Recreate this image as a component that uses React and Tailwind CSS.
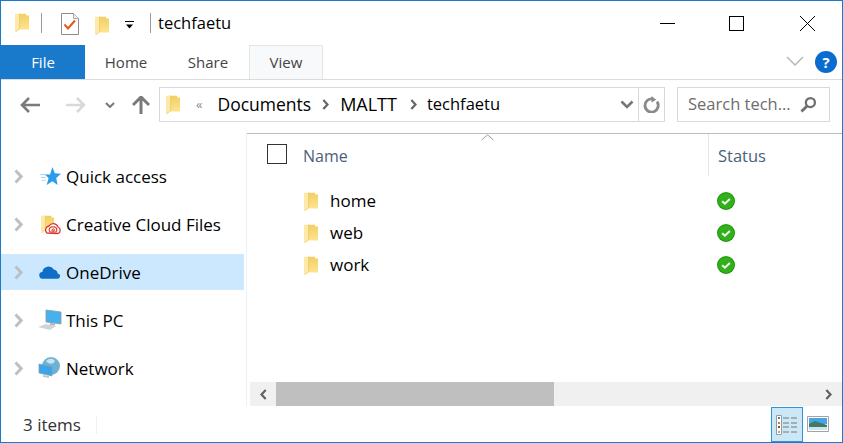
const font = { fontFamily: '"Open Sans", "Noto Sans", sans-serif' };

function Folder({ className = "w-[15px] h-[21px]" }) {
  return (
    <svg viewBox="0 0 15 21" className={className}>
      <defs>
        <linearGradient id="folderBody" x1="0" y1="0" x2="0" y2="1">
          <stop offset="0" stopColor="#f3cf63" />
          <stop offset="1" stopColor="#fde48f" />
        </linearGradient>
      </defs>
      <path d="M3 1h9v2h3v15H3z" fill="url(#folderBody)" />
      <path d="M0 1h5v16l-4 3.500-1 .5z" fill="#fee9a8" />
      <path d="M5 1v16l-4 3.500" fill="none" stroke="#e6c25a" strokeWidth="0.700" />
    </svg>
  );
}

function StatusCheck() {
  return (
    <svg viewBox="0 0 18 18" className="w-[18px] h-[18px]">
      <circle cx="9" cy="9" r="9" fill="#1f9a10" />
      <circle cx="9" cy="9" r="7.800" fill="#33b11c" />
      <path d="M5.200 9.200l2.700 2.500 4.900-4.600" fill="none" stroke="#f2fbea" strokeWidth="2" />
    </svg>
  );
}

function Arrow({ dir, className }) {
  return (
    <svg viewBox="0 0 9 15" className={className}>
      <path d={dir === "left" ? "M7.500 1.500L1.800 7.500l5.700 6" : "M1.500 1.500l5.700 6-5.700 6"} fill="none" stroke="currentColor" strokeWidth="3" />
    </svg>
  );
}

function NavRow({ icon, label, selected }) {
  return (
    <div className={`flex h-[36px] items-center ${selected ? "bg-[#cce8ff]" : ""}`}>
      <Arrow dir="right" className="ml-[13px] h-[15px] w-[9px] text-[#bfbfbf]" />
      <div className="ml-[15px] flex w-[28px] items-center">{icon}</div>
      <span className="mt-[1px] text-[17px] text-[#000]">{label}</span>
    </div>
  );
}

function FileRow({ name }) {
  return (
    <div className="flex h-[32px] items-center">
      <div className="ml-[57px] w-[26px]">
        <Folder className="w-[14px] h-[21px]" />
      </div>
      <span className="w-[387px] text-[17px] text-[#000]">{name}</span>
      <StatusCheck />
    </div>
  );
}

export default function App() {
  return (
    <div style={font} className="flex h-[443px] w-[843px] flex-col overflow-hidden border border-[#1979ca] bg-white text-black">
      {/* title bar */}
      <div className="flex h-[44px] items-center">
        <Folder className="ml-[14px] w-[14px] h-[21px] -translate-y-px" />
        <div className="ml-[12px] h-[20px] w-px bg-[#9a9a9a]" />
        <svg viewBox="0 0 18 22" className="ml-[19px] w-[18px] h-[22px] translate-y-px">
          <path d="M.5.5h12l5 5v16H.5z" fill="#fff" stroke="#8d8d8d" />
          <path d="M12.500.5v5h5" fill="#eee" stroke="#aaa" />
          <path d="M3.500 11.500l3.500 4 7-8" fill="none" stroke="#e2571e" strokeWidth="2" />
        </svg>
        <Folder className="ml-[16px] w-[14px] h-[21px] translate-y-[2px]" />
        <svg viewBox="0 0 10 10" className="ml-[16px] w-[10px] h-[10px] translate-y-[2px]">
          <path d="M0 1h9v1H0z" fill="#000" />
          <path d="M1 4.500h7L4.500 8.500z" fill="#000" />
        </svg>
        <div className="ml-[15px] h-[20px] w-px bg-[#9a9a9a]" />
        <span className="ml-[7px] text-[16.5px]">techfaetu</span>
        <div className="flex-1" />
        <div className="flex items-center">
          <div className="h-px w-[15px] bg-black" />
          <div className="ml-[54px] h-[15px] w-[15px] border border-black" />
          <svg viewBox="0 0 15 15" className="ml-[56px] w-[15px] h-[15px]">
            <path d="M0 0l15 15M15 0L0 15" stroke="#000" strokeWidth="1" />
          </svg>
          <div className="w-[27px]" />
        </div>
      </div>

      {/* tabs */}
      <div className="flex h-[35px] border-b border-[#dadbdc]">
        <div className="flex w-[84px] items-center justify-center bg-[#1979ca] text-[15px] text-white">File</div>
        <div className="flex w-[82px] items-center justify-center text-[15px] text-[#444]">Home</div>
        <div className="flex w-[82px] items-center justify-center text-[15px] text-[#444]">Share</div>
        <div className="flex w-[74px] items-center justify-center border-x border-t border-[#e4e5e6] bg-[#f8f9fa] text-[15px] text-[#444]">View</div>
        <div className="flex-1" />
        <svg viewBox="0 0 18 10" className="mr-[11px] mt-[11px] w-[18px] h-[10px]">
          <path d="M1 1l8 8 8-8" fill="none" stroke="#b8b8b8" strokeWidth="1.500" />
        </svg>
        <div className="mr-[5px] mt-[6px] flex h-[22px] w-[22px] items-center justify-center rounded-full bg-[#0a6cce] text-[15px] font-bold text-white">?</div>
      </div>

      {/* address bar */}
      <div className="flex h-[53px] items-center pb-[11px] pt-[7px]">
        <svg viewBox="0 0 20 16" className="ml-[19px] w-[20px] h-[16px]">
          <path d="M9 1L2 8l7 7M2 8h18" fill="none" stroke="#7a7a7a" strokeWidth="2.600" />
        </svg>
        <svg viewBox="0 0 20 16" className="ml-[26px] w-[20px] h-[16px]">
          <path d="M11 1l7 7-7 7M18 8H0" fill="none" stroke="#d9d9d9" strokeWidth="2.600" />
        </svg>
        <svg viewBox="0 0 10 6" className="ml-[19px] w-[10px] h-[6px]">
          <path d="M1 1l4 4 4-4" fill="none" stroke="#777" strokeWidth="2" />
        </svg>
        <svg viewBox="0 0 18 18" className="ml-[17px] w-[18px] h-[18px]">
          <path d="M1 9l8-8 8 8M9 1v17" fill="none" stroke="#7a7a7a" strokeWidth="3" />
        </svg>
        <div className="ml-[9px] flex h-[35px] w-[506px] items-center border border-[#d9d9d9]">
          <Folder className="ml-[6px] w-[14px] h-[21px]" />
          <span className="ml-[16px] text-[13px] text-[#888]">«</span>
          <span className="ml-[15px] text-[17.5px]">Documents</span>
          <Arrow dir="right" className="mx-[10px] h-[11px] w-[9px] text-[#666]" />
          <span className="text-[18px]">MALTT</span>
          <Arrow dir="right" className="ml-[12px] mr-[9px] h-[11px] w-[9px] text-[#666]" />
          <span className="text-[16.5px]">techfaetu</span>
          <div className="flex-1" />
          <svg viewBox="0 0 14 9" className="mr-[4px] w-[14px] h-[9px]">
            <path d="M1.500 1.500L7 7l5.500-5.500" fill="none" stroke="#777" strokeWidth="2.600" />
          </svg>
          <div className="flex h-full w-[26px] items-center justify-center border-l border-[#d9d9d9]">
            <svg viewBox="0 0 18 18" className="w-[17px] h-[17px]">
              <path d="M14.800 6a7 7 0 1 1-4.300-2.800" fill="none" stroke="#8a8a8a" strokeWidth="3" />
              <path d="M9 0v7l5-3z" fill="#8a8a8a" />
            </svg>
          </div>
        </div>
        <div className="ml-[12px] flex h-[35px] w-[153px] items-center justify-between border border-[#d9d9d9] pl-[10px] pr-[12px]">
          <span className="text-[16.5px] text-[#6d6d6d]">Search tech...</span>
          <svg viewBox="0 0 18 18" className="w-[17px] h-[17px]">
            <circle cx="11" cy="7" r="4.800" fill="none" stroke="#707070" strokeWidth="2.400" />
            <path d="M7.500 10.500L1.500 16.500" stroke="#707070" strokeWidth="3" />
          </svg>
        </div>
      </div>

      {/* body */}
      <div className="flex min-h-0 flex-1">
        <div className="w-[245px] pr-[2px] pt-[25px]">
          <div className="flex flex-col gap-[12px]">
            <NavRow
              label="Quick access"
              icon={
                <svg viewBox="0 0 22 20" className="ml-[2px] w-[21px] h-[19px]">
                  <path d="M13 0l2.500 6.500L22 7l-5 4.500L18.500 19 13 15l-6 4 2-7.500L5 8h5.500z" fill="#2c9cea" />
                  <path d="M0 8h6M1 11h5M2 14h4" stroke="#9ed2f5" strokeWidth="1" />
                </svg>
              }
            />
            <NavRow
              label="Creative Cloud Files"
              icon={
                <div className="relative ml-[3px] h-[24px] w-[22px]">
                  <Folder className="w-[13px] h-[24px]" />
                  <svg viewBox="0 0 16 14" className="absolute bottom-[1px] right-[2px] w-[16px] h-[14px]">
                    <path d="M2 12a4 4 0 0 1 2-7 5 5 0 0 1 9 1 3.500 3.500 0 0 1 0 6.500z" fill="#fff" stroke="#e0342b" strokeWidth="1.300" />
                    <path d="M5 11a3 3 0 0 1 3-5 3 3 0 0 1 3 5z" fill="none" stroke="#e0342b" strokeWidth="1.200" />
                    <path d="M7 10a1.500 1.500 0 0 1 2-2 1.500 1.500 0 0 1 0 2z" fill="none" stroke="#e0342b" strokeWidth="1" />
                  </svg>
                </div>
              }
            />
            <NavRow
              selected
              label="OneDrive"
              icon={
                <svg viewBox="0 0 23 16" className="ml-[1px] w-[22px] h-[16px]">
                  <path d="M4 15a3.500 3.500 0 0 1-.5-7A6.500 6.500 0 0 1 15.500 5.500a4.800 4.800 0 0 1 4 4A2.800 2.800 0 0 1 20 15z" fill="#0f6fc6" />
                </svg>
              }
            />
            <NavRow
              label="This PC"
              icon={
                <svg viewBox="0 0 24 22" className="w-[24px] h-[22px]">
                  <path d="M8 1l15 2v12L8 13z" fill="#45b1ef" stroke="#8c9aa5" strokeWidth="0.800" />
                  <path d="M12 14l5 .6v2l-5-.6z" fill="#a9b4bc" />
                  <path d="M0 18l8-3 10 2-6 4z" fill="#cfd4d8" />
                </svg>
              }
            />
            <NavRow
              label="Network"
              icon={
                <svg viewBox="0 0 23 22" className="w-[23px] h-[22px]">
                  <circle cx="13" cy="9" r="9" fill="#6db2d4" />
                  <path d="M8 4c3-3 7-3 9 0-1 3-6 4-9 0z" fill="#c9e3ef" />
                  <path d="M1 7l13 3v9L1 16z" fill="#37a6ec" stroke="#8c9aa5" strokeWidth="0.700" />
                  <path d="M5 18l6 1v2l-6-1z" fill="#c0c6cb" />
                </svg>
              }
            />
          </div>
        </div>

        <div className="flex min-w-0 flex-1 flex-col border-l-[1px] border-[#f0f0f0]">
          <div className="relative flex h-[44px] border-t border-[#bcbcbc] pl-[2px]">
            <svg viewBox="0 0 13 7" className="absolute left-[234px] top-0 w-[13px] h-[7px]">
              <path d="M.5 6L6.500.8 12.500 6" fill="none" stroke="#9a9a9a" />
            </svg>
            <div className="ml-[18px] mt-[10px] h-[20px] w-[20px] border-[1.500px] border-[#333]" />
            <span className="ml-[16px] mt-[10px] w-[405px] text-[16px] leading-[24px] text-[#4c607a]">Name</span>
            <div className="h-[42px] w-px bg-[#e5e5e5]" />
            <span className="ml-[9px] mt-[10px] text-[16.5px] leading-[24px] text-[#4c607a]">Status</span>
          </div>
          <div className="pt-[8px]">
            <FileRow name="home" />
            <FileRow name="web" />
            <FileRow name="work" />
          </div>
          <div className="flex-1" />
          <div className="ml-[3px] flex h-[24px] items-center bg-[#f0f0f0]">
            <div className="flex w-[26px] justify-center">
              <Arrow dir="left" className="h-[11px] w-[9px] text-[#606060]" />
            </div>
            <div className="h-full w-[278px] bg-[#bfbfbf]" />
            <div className="flex-1" />
            <div className="flex w-[27px] justify-center">
              <Arrow dir="right" className="h-[11px] w-[9px] text-[#606060]" />
            </div>
          </div>
        </div>
      </div>

      {/* status bar */}
      <div className="flex h-[36px] items-end">
        <span className="mb-[5px] ml-[22px] text-[17px] text-[#333]">3 items</span>
        <div className="mb-[8px] ml-[15px] h-[18px] w-px bg-[#efefef]" />
        <div className="flex-1" />
        <div className="flex h-[35px] w-[32px] items-center justify-center border border-[#2a96d8] bg-[#cce8f7]">
          <svg viewBox="0 0 22 20" className="w-[22px] h-[20px]">
            <path d="M.5.5h5v19h-5z" fill="#fff" stroke="#999" />
            <path d="M2 2h2v2H2z" fill="#4a7fb5" />
            <path d="M2 7h2v2H2z" fill="#8b9a2b" />
            <path d="M2 11h2v2H2z" fill="#b8352b" />
            <path d="M2 16h2v2H2z" fill="#8fb3a0" />
            <path d="M7 3h6M15 3h6M7 8h6M15 8h6M7 12h6M15 12h6M7 17h6M15 17h6" stroke="#777" />
          </svg>
        </div>
        <svg viewBox="0 0 22 16" className="mb-[10px] ml-[4px] mr-[13px] w-[22px] h-[16px]">
          <path d="M.5.5h21v15H.5z" fill="#fff" stroke="#a3a3a3" />
          <path d="M2 2h18v6H2z" fill="#4aa3e8" />
          <path d="M2 8l6-3 12 4v2H2z" fill="#3f7a62" />
          <path d="M2 11h18v3H2z" fill="#cfe2ee" />
        </svg>
      </div>
    </div>
  );
}
